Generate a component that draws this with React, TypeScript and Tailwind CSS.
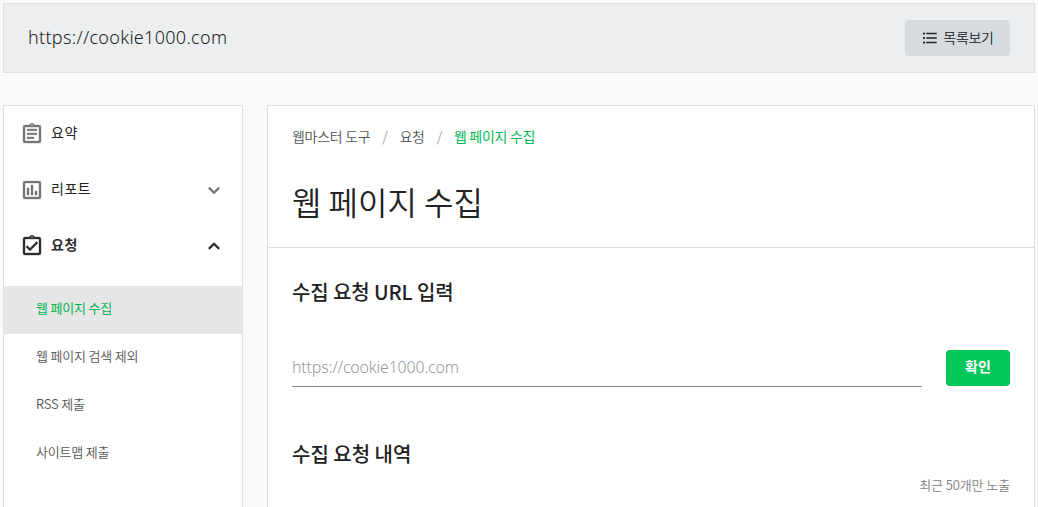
import { useState } from "react";
import { MdFormatListBulleted } from "react-icons/md";

const ClipboardTextIcon = () => (
  <svg
    viewBox="0 0 24 24"
    className="size-6 shrink-0"
    fill="currentColor"
    stroke="currentColor"
    strokeWidth="0.35"
  >
    <path d="M19 3h-4.4a2.8 2.8 0 0 0-5.2 0H5a2 2 0 0 0-2 2v14a2 2 0 0 0 2 2h14a2 2 0 0 0 2-2V5a2 2 0 0 0-2-2zm-7-.4a.75.75 0 1 1 0 1.5.75.75 0 0 1 0-1.5zM19 19H5V5h14v14zM7 7h10v1.7H7V7zm0 4h10v1.7H7V11zm0 4h7v1.7H7V15z" />
  </svg>
);

const ReportIcon = () => (
  <svg
    viewBox="0 0 24 24"
    className="size-6 shrink-0"
    fill="currentColor"
    stroke="currentColor"
    strokeWidth="0.35"
  >
    <path d="M19 3H5a2 2 0 0 0-2 2v14a2 2 0 0 0 2 2h14a2 2 0 0 0 2-2V5a2 2 0 0 0-2-2zm0 16H5V5h14v14zM7 10h2v7H7v-7zm4-3h2v10h-2V7zm4 6h2v4h-2v-4z" />
  </svg>
);

const ClipboardCheckIcon = () => (
  <svg
    viewBox="0 0 24 24"
    className="size-6 shrink-0"
    fill="currentColor"
    stroke="currentColor"
    strokeWidth="0.35"
  >
    <path d="M19 3h-4.4a2.8 2.8 0 0 0-5.2 0H5a2 2 0 0 0-2 2v14a2 2 0 0 0 2 2h14a2 2 0 0 0 2-2V5a2 2 0 0 0-2-2zm-7-.4a.75.75 0 1 1 0 1.5.75.75 0 0 1 0-1.5zM19 19H5V5h14v14zM17.99 9l-1.41-1.42-6.59 6.59-2.58-2.57-1.42 1.41 4 3.99z" />
  </svg>
);

const ChevronIcon = ({ open }: { open?: boolean }) => (
  <svg
    viewBox="0 0 24 24"
    className="ml-auto size-6"
    fill="none"
    stroke="currentColor"
    strokeWidth="2.2"
  >
    <path d={open ? "M6.8 14.9 12 9.7l5.2 5.2" : "M6.8 9.6 12 14.8l5.2-5.2"} />
  </svg>
);

const requestMenu = ["웹 페이지 수집", "웹 페이지 검색 제외", "RSS 제출", "사이트맵 제출"];

const Sidebar = () => {
  const [active, setActive] = useState("웹 페이지 수집");

  return (
    <aside className="w-60 shrink-0 border border-b-0 border-[#dfdfdf] bg-white">
      <div className="flex h-14 items-center px-4 text-sm text-[#222]">
        <span className="text-[#757575]">
          <ClipboardTextIcon />
        </span>
        <span className="-mt-1 ml-[7px] tracking-[0.5px]">요약</span>
      </div>
      <div className="flex h-14 items-center px-4 text-sm text-[#222]">
        <span className="text-[#757575]">
          <ReportIcon />
        </span>
        <span className="-mt-1 ml-[7px] tracking-[0.5px]">리포트</span>
        <span className="ml-auto text-[#757575]">
          <ChevronIcon />
        </span>
      </div>
      <div className="flex h-14 items-center px-4 text-sm font-bold text-[#2b2b2b]">
        <ClipboardCheckIcon />
        <span className="-mt-1 ml-[7px] tracking-[0.5px]">요청</span>
        <ChevronIcon open />
      </div>
      <ul className="mt-3">
        {requestMenu.map((item) => (
          <li key={item}>
            <button
              className={`flex h-12 w-full items-center pb-1 pl-8 text-[13px] tracking-[-0.2px] ${
                item === active ? "bg-[#e6e6e6] text-[#03b350]" : "font-[350] text-[#555]"
              }`}
              onClick={() => setActive(item)}
            >
              {item}
            </button>
          </li>
        ))}
      </ul>
    </aside>
  );
};

const App = () => {
  return (
    <div className="flex h-[507px] flex-col overflow-hidden bg-[#fafafa] px-[3px] pt-[3px] font-['Noto_Sans_CJK_KR',sans-serif] text-[#222]">
      <header className="flex h-[70px] w-[1032px] shrink-0 items-center justify-between border border-[#dcdfe0] bg-[#eceeef] px-6">
        <h2 className="-mt-0.5 font-['Noto_Sans','Noto_Sans_CJK_KR',sans-serif] text-lg font-light tracking-[0.3px]">
          https://cookie1000.com
        </h2>
        <button className="flex h-9 w-[105px] items-center justify-center rounded bg-[#d5dbdf] text-sm font-[350] tracking-[-0.3px]">
          <MdFormatListBulleted className="mr-1 size-[18px]" />
          <span className="-mt-0.5">목록보기</span>
        </button>
      </header>

      <div className="mt-8 flex w-[1032px] grow gap-6">
        <Sidebar />
        <main className="grow border border-b-0 border-[#dfdfdf] bg-white">
          <div className="h-[142px] border-b border-[#dfdfdf] px-6 pt-5">
            <nav className="flex h-5 items-center text-sm tracking-[-0.3px] text-[#555]">
              <span className="font-[350]">웹마스터 도구</span>
              <span className="px-3 font-[350] text-[#9e9e9e]">/</span>
              <span className="font-[350]">요청</span>
              <span className="px-3 font-[350] text-[#9e9e9e]">/</span>
              <span className="text-[#03b857]">웹 페이지 수집</span>
            </nav>
            <h1 className="mt-8 text-[32px] leading-[46px] font-[350]">웹 페이지 수집</h1>
          </div>

          <section className="px-6 pt-7">
            <h3 className="text-xl leading-8 font-medium tracking-[-0.1px]">수집 요청 URL 입력</h3>
            <div className="mt-[42px] flex h-[37px] gap-6">
              <input
                className="grow border-b border-[#8c8c8c] pb-0.5 font-['Noto_Sans','Noto_Sans_CJK_KR',sans-serif] text-base font-light tracking-[-0.2px] outline-none placeholder:text-[#999]"
                placeholder="https://cookie1000.com"
              />
              <button className="h-9 w-16 rounded bg-[#03c75a] pb-1 text-sm font-bold text-white">
                확인
              </button>
            </div>
          </section>

          <section className="px-6 pt-[51px]">
            <h3 className="text-xl leading-8 font-medium">수집 요청 내역</h3>
            <p className="mt-[3px] text-right text-[13px] leading-6 font-[350] tracking-[-0.1px] text-[#808080]">
              최근 50개만 노출
            </p>
          </section>
        </main>
      </div>
    </div>
  );
};

export default App;
